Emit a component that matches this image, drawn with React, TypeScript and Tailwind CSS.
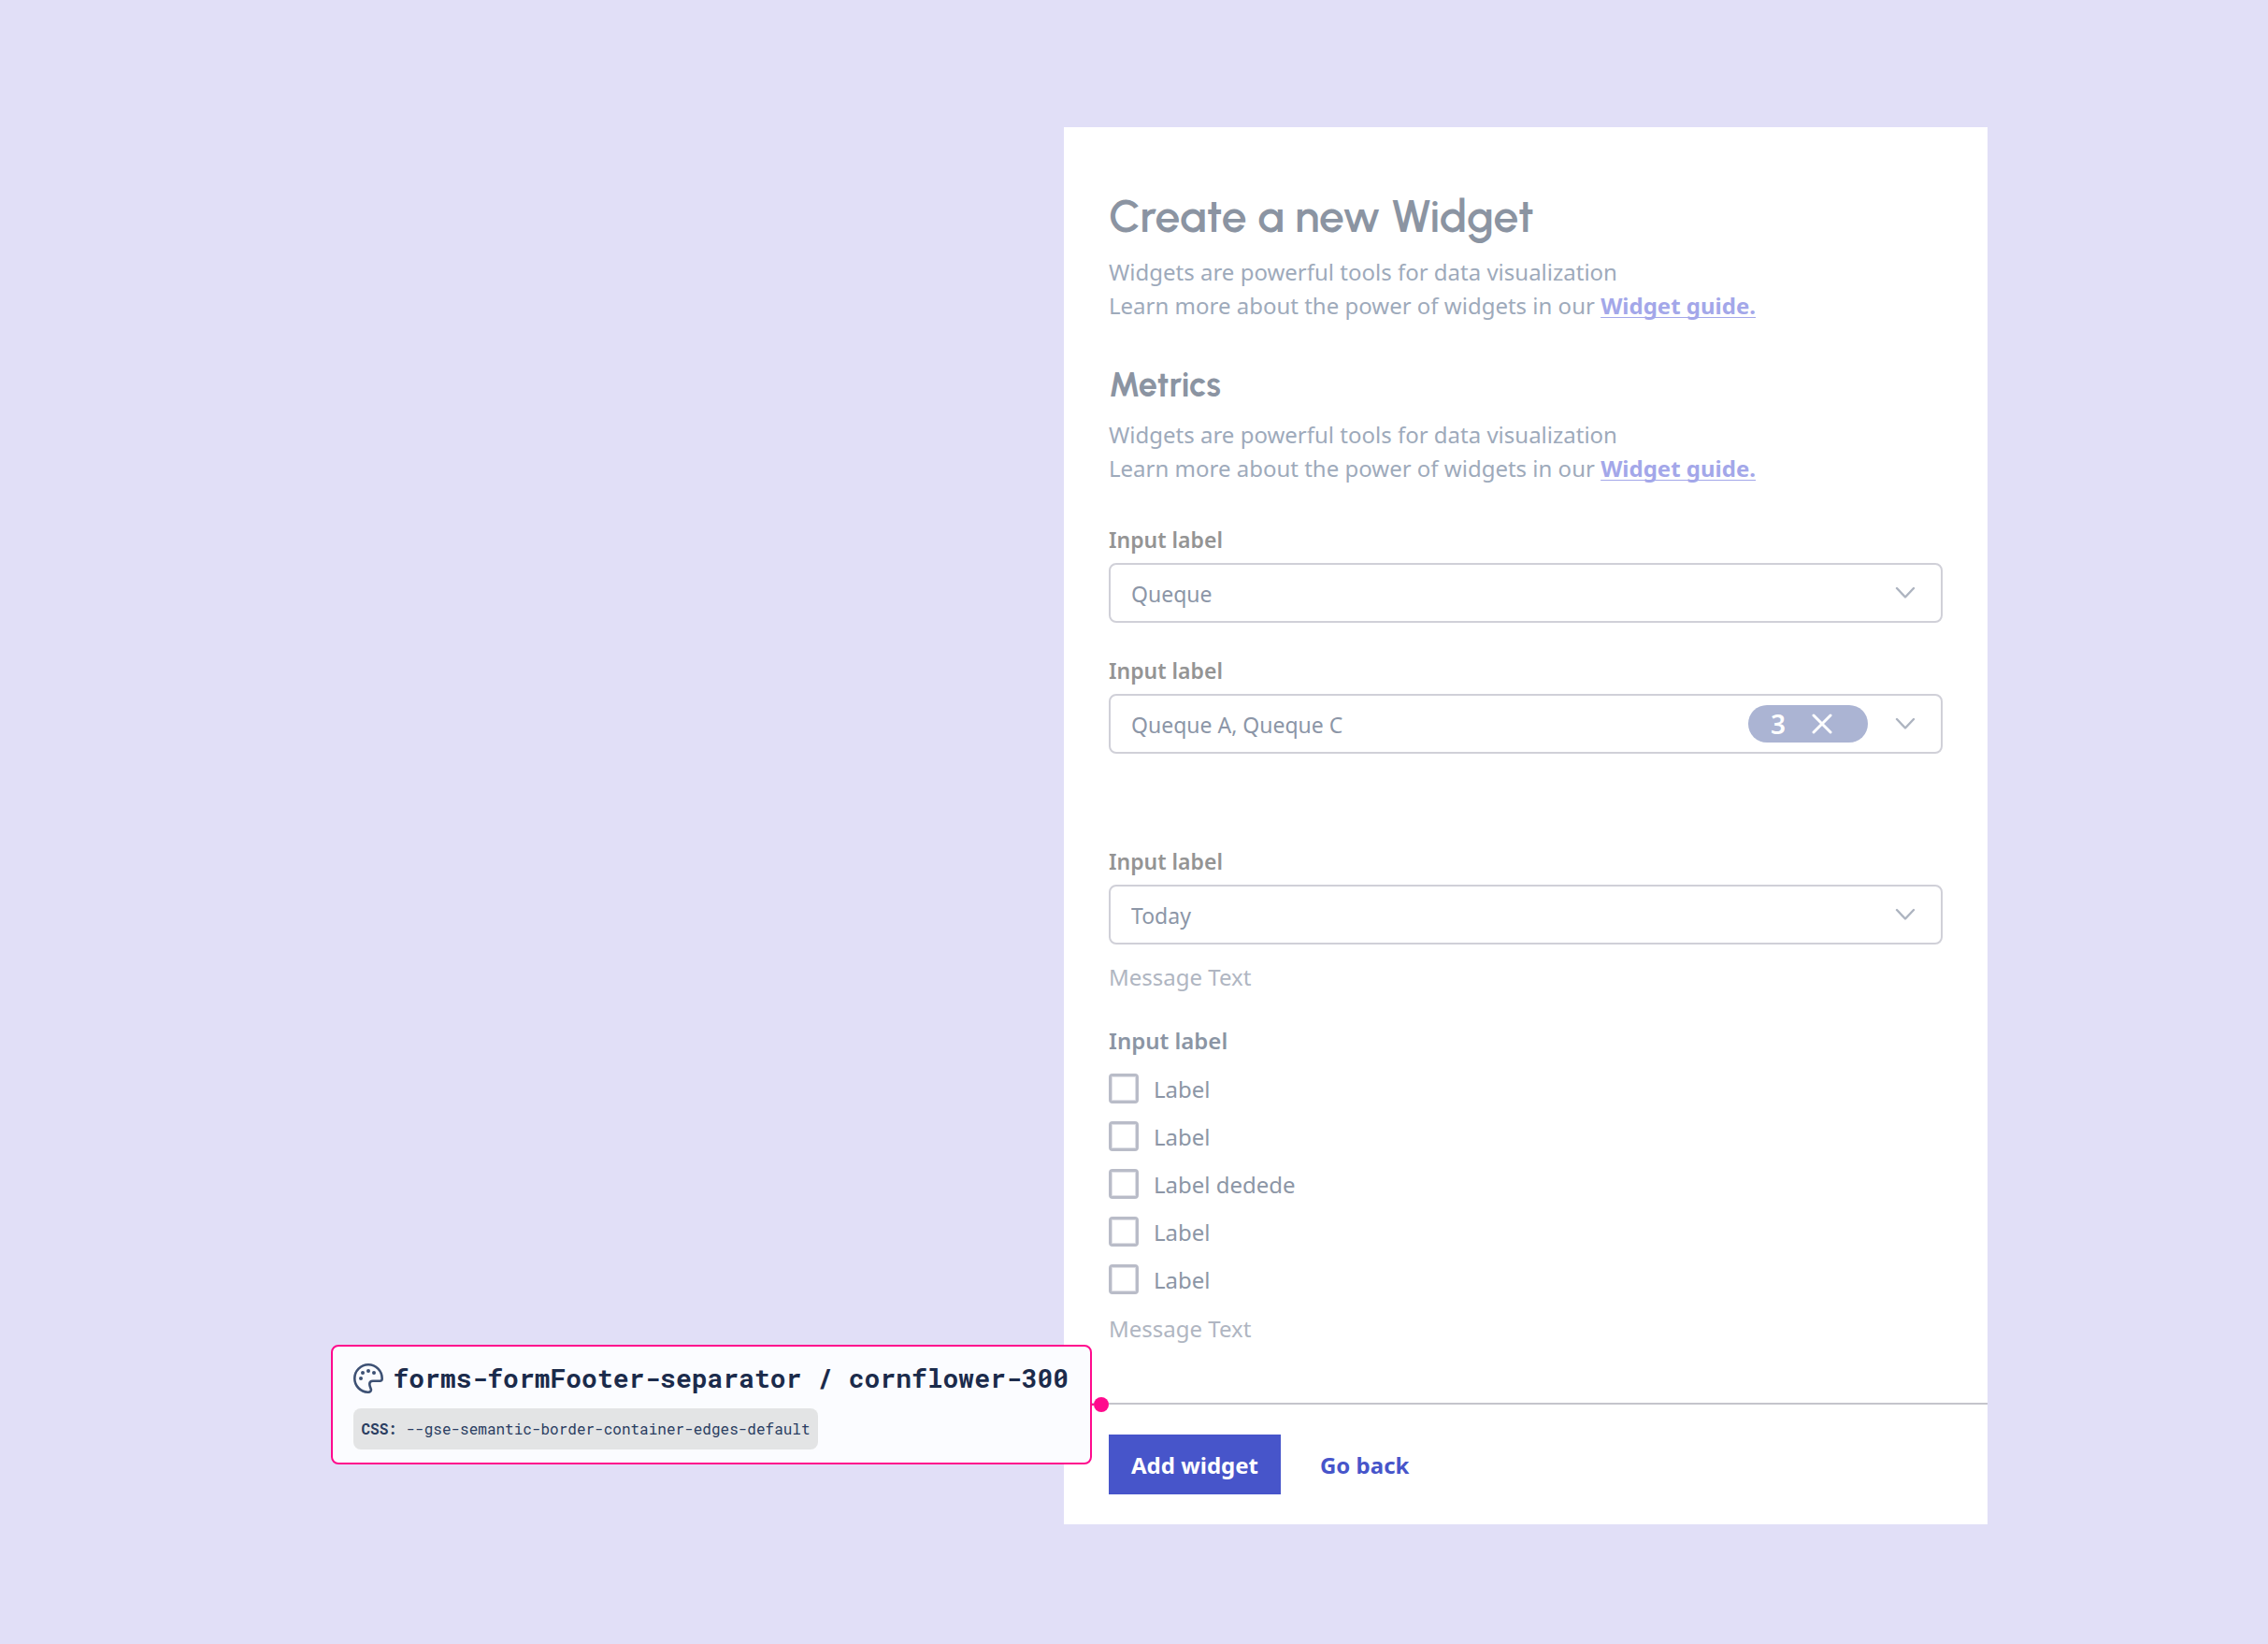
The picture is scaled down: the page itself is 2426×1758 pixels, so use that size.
import type { ReactNode } from "react";

const checkboxes = ["Label", "Label", "Label dedede", "Label", "Label"];

function PaletteIcon() {
  return (
    <svg viewBox="0 0 32 32" className="size-8 shrink-0" fill="none" aria-hidden="true">
      <path
        d="M16 1.3C7.8 1.3 1.3 7.9 1.3 16c0 8 6.3 14.4 14.2 14.7 2.500.1 3.900-1.300 3.300-3.300-.9-2.400-1.500-3.600-1.500-5.400 0-2.300 1.500-3.300 3.500-3.300h7.500c1.600 0 2.400-.9 2.400-2.500C30.700 7.900 24.200 1.300 16 1.300Z"
        stroke="#3d5174"
        strokeWidth="2.600"
      />
      <g fill="#3d5174">
        <circle cx="8" cy="16" r="2" />
        <circle cx="10" cy="10" r="2" />
        <circle cx="16" cy="8" r="2" />
        <circle cx="22" cy="10" r="2" />
      </g>
    </svg>
  );
}

function ChevronIcon() {
  return (
    <svg viewBox="0 0 22 14" className="pointer-events-none h-3.5 w-[22px] shrink-0" fill="none" aria-hidden="true">
      <path d="M2 2l9 9.500L20 2" stroke="#adb4c0" strokeWidth="2.400" strokeLinecap="round" strokeLinejoin="round" />
    </svg>
  );
}

function Intro() {
  return (
    <p className="text-2xl leading-9 text-[#9eaabb]">
      Widgets are powerful tools for data visualization
      <br />
      Learn more about the power of widgets in our{" "}
      <a href="#guide" className="font-bold text-[#a3a7e9] underline decoration-1 underline-offset-3 [text-decoration-skip-ink:none]">
        Widget guide.
      </a>
    </p>
  );
}

function SelectField({ id, value, children }: { id: string; value: string; children?: ReactNode }) {
  return (
    <div className="flex flex-col gap-1.5">
      <label htmlFor={id} className="text-[23px] leading-[38px] font-semibold text-[#949494]">
        Input label
      </label>
      <div className="flex h-16 items-center rounded-lg border-2 border-[#d0d0d8] pr-[27px] pl-[22px]">
        <select id={id} className="h-full min-w-0 flex-1 appearance-none pt-0.5 text-[23px] text-[#8c96a7] outline-none">
          <option>{value}</option>
        </select>
        {children}
        <ChevronIcon />
      </div>
    </div>
  );
}

function TokenCallout() {
  return (
    <div className="absolute top-0 right-[calc(100%-48px)] flex -translate-y-1/2 items-center font-['Roboto_Mono','DejaVu_Sans_Mono',monospace] whitespace-nowrap">
      <div className="flex h-32 flex-col items-start rounded-lg border-2 border-[#ff0a8d] bg-[#fbfcff] pr-[23px] pl-[22px] pt-3.5">
        <div className="flex items-center gap-2.5">
          <PaletteIcon />
          <span className="text-[28px] leading-10 font-bold text-[#1b2b4b]">
            forms-formFooter-separator / cornflower-300
          </span>
        </div>
        <code className="mt-3 rounded-lg bg-[#e3e4e5] px-2 font-[inherit] text-base leading-11 text-[#2a3d61]">
          <b>CSS:</b> --gse-semantic-border-container-edges-default
        </code>
      </div>
      <span className="h-0.5 w-0.5 bg-[#ff0a8d]" />
      <span className="size-4 rounded-full bg-[#ff0a8d]" />
    </div>
  );
}

export default function App() {
  return (
    <main className="flex min-h-screen justify-end bg-[#e1dff7] pt-34 pr-75 pb-32 font-['Noto_Sans',sans-serif]">
      <form className="w-full max-w-[988px] bg-white">
        <div className="px-12 pt-[65px] pb-[60px]">
          <h1 className="mb-3 font-['Urbanist','Lato',sans-serif] text-5xl leading-[60px] font-semibold text-[#8b94a2]">
            Create a new Widget
          </h1>
          <Intro />
          <h2 className="mt-11 mb-3 font-['Urbanist','Lato',sans-serif] text-4xl leading-[46px] font-bold text-[#8b94a2]">
            Metrics
          </h2>
          <Intro />

          <div className="mt-[39px] flex flex-col gap-8">
            <SelectField id="queue" value="Queque" />
            <SelectField id="queues" value="Queque A, Queque C">
              <div className="mr-[29px] flex h-10 w-32 items-center rounded-full bg-[#abb4d3] pl-6 text-[28px] leading-10 font-semibold text-white">
                3
                <button type="button" aria-label="Clear selection" className="ml-7">
                  <svg viewBox="0 0 22 22" className="size-[22px]" fill="none" aria-hidden="true">
                    <path d="M2 2l18 18M20 2L2 20" stroke="white" strokeWidth="3" strokeLinecap="round" />
                  </svg>
                </button>
              </div>
            </SelectField>
          </div>

          <div className="mt-24">
            <SelectField id="period" value="Today" />
            <p className="mt-4 text-2xl leading-[38px] text-[#b0b6c2]">Message Text</p>
          </div>

          <fieldset className="mt-[30px]">
            <legend className="mb-4 text-2xl leading-[38px] font-semibold text-[#8b95a4]">Input label</legend>
            <div className="flex flex-col gap-[19px]">
              {checkboxes.map((label, i) => (
                <label key={i} className="flex h-8 items-center gap-4 text-2xl text-[#8c96a6]">
                  <input
                    type="checkbox"
                    className="size-8 appearance-none rounded-sm border-3 border-[#b9bcc8] inset-ring inset-ring-[#dfe0e6]"
                  />
                  <span className="pt-0.5">{label}</span>
                </label>
              ))}
            </div>
            <p className="mt-[18px] text-2xl leading-[38px] text-[#b0b6c2]">Message Text</p>
          </fieldset>
        </div>

        <footer className="relative flex items-center gap-[18px] border-t-2 border-[#c5c5cc] px-12 py-8">
          <button type="submit" className="h-16 bg-[#4755ca] px-6 pt-0.5 text-2xl font-bold text-white">
            Add widget
          </button>
          <button type="button" className="h-16 px-6 pt-0.5 text-2xl font-bold text-[#4755ca]">
            Go back
          </button>
          <TokenCallout />
        </footer>
      </form>
    </main>
  );
}
